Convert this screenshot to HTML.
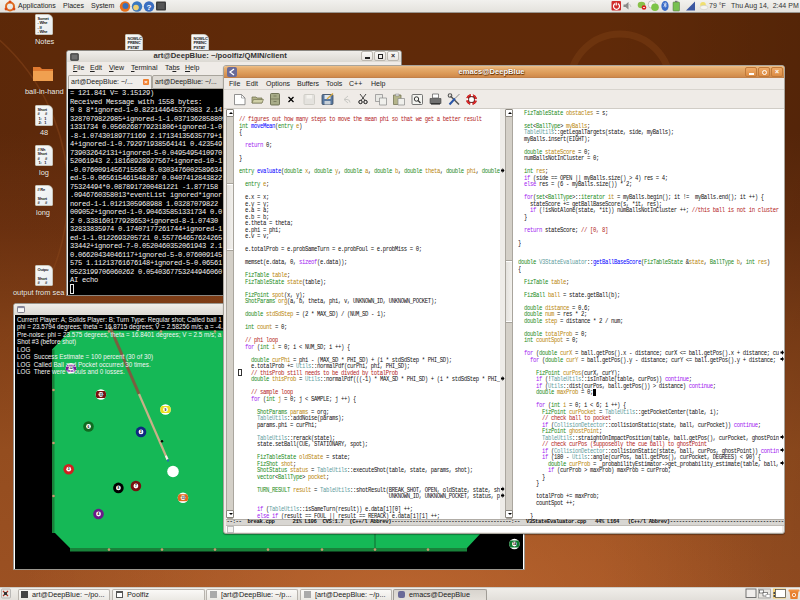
<!DOCTYPE html>
<html><head><meta charset="utf-8">
<style>
*{margin:0;padding:0;box-sizing:border-box}
html,body{width:800px;height:600px;overflow:hidden}
body{position:relative;font-family:"Liberation Sans",sans-serif;
background:radial-gradient(ellipse 380px 200px at 400px 610px,rgba(196,108,52,0.7),rgba(196,108,52,0) 100%),linear-gradient(90deg,rgba(0,0,0,0.04),rgba(0,0,0,0) 40%,rgba(0,0,0,0) 75%,rgba(0,0,0,0.12)),linear-gradient(180deg,#602a08 0%,#602a0a 22%,#6e3210 38%,#864218 55%,#9a5020 75%,#a25424 100%);}
.a{position:absolute}
/* top panel */
#top{left:0;top:0;width:800px;height:13px;background:linear-gradient(#f2f1ee,#e4e2dd);border-bottom:1px solid #9a9690}
.pt{position:absolute;top:0px;font-size:7px;color:#222;line-height:11px;white-space:nowrap}
/* desktop icons */
.di{position:absolute;width:18px;height:21px;background:linear-gradient(135deg,#fafaf8,#e8ecf0);border:1px solid #c8c4b8;border-radius:1px 5px 1px 1px}
.di i{display:block;font-style:normal;font:bold 4px "Liberation Sans",sans-serif;color:#222;line-height:4.5px;padding:1.5px 0 0 1.5px;white-space:pre;letter-spacing:-0.2px}
.dl{position:absolute;font-size:7.4px;color:#f4ece4;white-space:nowrap;text-shadow:0 0 1px #3a1a00}
/* windows */
.win{position:absolute;background:#efebe7;border:1px solid #8a8680;border-radius:3px 3px 0 0;overflow:hidden}
.tb{position:absolute;left:0;top:0;right:0;height:11px;background:linear-gradient(#f0eeea,#dcd9d3)}
.tt{position:absolute;top:0;font:bold 7.5px "Liberation Sans",sans-serif;color:#333;line-height:11px;white-space:nowrap}
.btn{position:absolute;top:0px;width:12px;height:10px;border:1px solid #bcb8b0;border-radius:2px;background:linear-gradient(#faf9f7,#e8e5e0);font:bold 7px/8px "Liberation Sans",sans-serif;color:#222;text-align:center}
.menu{position:absolute;font-size:7px;color:#222;line-height:10px;white-space:nowrap}
/* terminal */
.tl{position:absolute;left:2px;font:7.1px/8.5px "Liberation Mono",monospace;letter-spacing:-0.26px;color:#f2f2f2;white-space:pre}
/* emacs code */
.cl{position:absolute;left:0;font:5.6px/6.5px "Liberation Mono",monospace;letter-spacing:-0.36px;color:#111;white-space:pre}
.cs .cl{transform:scaleY(1.15);transform-origin:0 50%}
.cl i{font-style:normal}
i.r{color:#b22222}i.t{color:#228b22}i.f{color:#0000ff}i.k{color:#a020f0}i.v{color:#b8860b}i.c{color:#5f9ea0}
.pl{position:absolute;left:2px;font:6.3px/7.5px "Liberation Sans",sans-serif;color:#f4f4f4;white-space:pre}
.tbtn{position:absolute;top:589px;height:11px;border:1px solid #b8b4ae;border-bottom:none;border-radius:2px 2px 0 0;background:linear-gradient(#faf9f7,#ebe9e4)}
.tbi{position:absolute;top:591px;width:7px;height:7px}
.tbt{position:absolute;top:589px;font-size:7.3px;line-height:11px;color:#222;white-space:nowrap}
.sbb{position:absolute;width:8px;height:8px;background:#fff;border:1px solid #8a867e;border-radius:1px}
.sbb:after{content:"";position:absolute;left:1.5px;top:2px;border-left:2px solid transparent;border-right:2px solid transparent;border-bottom:2.5px solid #000}
.sbb.dn:after{border-bottom:none;border-top:2.5px solid #000}
.ball{position:absolute;width:11px;height:11px;border-radius:50%}
</style></head><body>

<!-- desktop swirls -->
<svg class="a" style="left:0;top:0" width="800" height="600">
  <circle cx="620" cy="84" r="50" fill="none" stroke="#7e4016" stroke-width="7" opacity="0.45"/>
  <circle cx="-137" cy="193" r="205" fill="none" stroke="#85441a" stroke-width="1.6" opacity="0.55"/>
</svg>

<!-- top panel -->
<div id="top" class="a">
  <svg class="a" style="left:4px;top:0" width="12" height="13"><circle cx="6" cy="6.5" r="4" fill="none" stroke="#dd6b20" stroke-width="2"/><circle cx="6" cy="1.8" r="1.4" fill="#dd4814"/><circle cx="2" cy="9" r="1.4" fill="#dd4814"/><circle cx="10" cy="9" r="1.4" fill="#dd4814"/></svg>
  <div class="pt" style="left:18px">Applications</div>
  <div class="pt" style="left:63px">Places</div>
  <div class="pt" style="left:91px">System</div>
  <svg class="a" style="left:119px;top:0" width="50" height="13">
    <circle cx="6" cy="6.5" r="5.2" fill="#e8701a"/><circle cx="6.5" cy="6" r="3" fill="#3a6fb8"/>
    <circle cx="18" cy="6.5" r="5.2" fill="#3a78c0"/><circle cx="17" cy="7.5" r="2.8" fill="#f0d070"/>
    <circle cx="30" cy="6.5" r="5.2" fill="#3a6ec0"/><text x="30" y="10" font-size="8" font-weight="bold" fill="#fff" text-anchor="middle" font-family="Liberation Sans">?</text>
    <rect x="37" y="1.5" width="10" height="9" rx="1" fill="#3c3c3c"/><rect x="38.5" y="3" width="7" height="6" fill="#555"/>
  </svg>
  <svg class="a" style="left:0;top:0" width="800" height="12">
    <rect x="611.5" y="1" width="9.5" height="9.5" rx="1" fill="#d02a2a"/><path d="M617.8 3.6a3 3 0 1 1 -2.6 0" fill="none" stroke="#fff" stroke-width="1.2"/><path d="M616.25 2.5v3" stroke="#fff" stroke-width="1.2"/>
    <path d="M623.5 4.5h2l3-2.5v7.5l-3-2.5h-2z" fill="#8a8a88"/><path d="M629.5 4l1.5 3" stroke="#aaa" stroke-width="0.6"/>
    <ellipse cx="641.5" cy="5" rx="3.8" ry="3.2" fill="#88c048"/><circle cx="644" cy="7.5" r="2.3" fill="#d82020"/><rect x="643" y="7.2" width="2" height="0.8" fill="#fff"/>
    <circle cx="652" cy="4.5" r="3.8" fill="#f4f4f2" stroke="#999" stroke-width="0.5"/><circle cx="655" cy="7.3" r="3.8" fill="#7cc448"/>
    <ellipse cx="665" cy="6" rx="3.6" ry="5" fill="#3a6cc8"/><path d="M663.5 3.5l3 2.5-1.5 1.2v-4.5l1.5 1.2-3 2.5" stroke="#fff" stroke-width="0.6" fill="none"/>
    <rect x="673" y="2" width="6.5" height="9" rx="0.8" fill="#78c050" stroke="#507040" stroke-width="0.5"/><rect x="675" y="0.8" width="2.5" height="1.4" fill="#777"/>
    <path d="M686 10.5h9v-9z" fill="#3a56a0"/>
    <circle cx="703" cy="4.8" r="2.8" fill="#f0e070"/><ellipse cx="704" cy="7.5" rx="3.8" ry="2.2" fill="#f4f4f0" stroke="#b8b8b0" stroke-width="0.4"/>
  </svg>
  <div class="pt" style="left:709px;white-space:pre;color:#333">79 °F</div>
  <div class="pt" style="left:731px;white-space:pre;color:#333">Thu Aug 14,  2:44 PM</div>
</div>

<!-- desktop icons -->
<div class="di" style="left:35px;top:14px"><i>Somet
- Whe
- If
- Whe</i></div>
<div class="dl" style="left:35px;top:37px">Notes</div>
<svg class="a" style="left:32px;top:64px" width="22" height="18"><path d="M1 3h7l2 2h11v12H1z" fill="#e07a30"/><path d="M1 7h20v10H1z" fill="#f0a050"/></svg>
<div class="dl" style="left:25px;top:87px">ball-in-hand</div>
<div class="di" style="left:35px;top:105px"><i>Short
#      #
 1:   1
 2:   1</i></div>
<div class="dl" style="left:40px;top:128px">48</div>
<div class="di" style="left:35px;top:145px"><i>// Nh
Short
#      #
 1:   1</i></div>
<div class="dl" style="left:39px;top:168px">log</div>
<div class="di" style="left:35px;top:185px"><i>// Re

Short
#      #</i></div>
<div class="dl" style="left:36px;top:208px">long</div>
<div class="di" style="left:35px;top:265px"><i>Outpu

Short
#      #</i></div>
<div class="dl" style="left:13px;top:288px">output from sea</div>
<div class="di" style="left:125px;top:34px"><i>NOWLC
PRENC
PSTAT</i></div>
<div class="di" style="left:191px;top:34px"><i>NOWLC
PRENC
PSTAT</i></div>

<!-- terminal window -->
<div class="win" style="left:66px;top:50px;width:336px;height:246px">
  <div class="tb"></div>
  <svg class="a" style="left:3px;top:2px" width="9" height="8"><rect x="0.5" y="0.5" width="8" height="7" rx="1" fill="#444" stroke="#333" stroke-width="0.6"/><rect x="1.5" y="1.5" width="6" height="5" fill="#707070"/></svg>
  <div class="tt" style="left:86.5px;top:-1.5px;font-size:7.7px">art@DeepBlue: ~/poolfiz/QMIN/client</div>
  <div class="btn" style="left:294px"><div class="a" style="left:3px;top:5px;width:5px;height:1.5px;background:#222"></div></div>
  <div class="btn" style="left:307px"><div class="a" style="left:3px;top:2px;width:5px;height:4.5px;border:1px solid #222;border-top-width:1.5px"></div></div>
  <div class="btn" style="left:320px">×</div>
  <div class="menu" style="left:6px;top:12px"><u>F</u>ile</div>
  <div class="menu" style="left:23px;top:12px"><u>E</u>dit</div>
  <div class="menu" style="left:42px;top:12px"><u>V</u>iew</div>
  <div class="menu" style="left:64px;top:12px"><u>T</u>erminal</div>
  <div class="menu" style="left:98px;top:12px">Ta<u>b</u>s</div>
  <div class="menu" style="left:118px;top:12px"><u>H</u>elp</div>
  <div class="a" style="left:1px;top:24px;width:84px;height:14px;background:#efedea;border:1px solid #a8a49c;border-bottom:none;border-radius:2px 2px 0 0"></div>
  <div class="menu" style="left:4px;top:26px">art@DeepBlue: ~/...</div>
  <div class="a" style="left:76px;top:28px;width:6px;height:6px;background:#f08030;border-radius:1px;font:bold 6px/6px 'Liberation Sans';color:#fff;text-align:center">×</div>
  <div class="a" style="left:85px;top:24px;width:200px;height:14px;background:#dedad4;border:1px solid #a8a49c;border-radius:2px 2px 0 0"></div>
  <div class="menu" style="left:88px;top:26px">art@DeepBlue: ~/...</div>
  <div class="a" style="left:1px;top:38px;width:334px;height:206px;background:#000">
    <div class="a" style="left:0;top:0;width:155px;height:206px">
<div class="tl" style="top:0.00px">= 121.841 V= 3.15129)</div>
<div class="tl" style="top:8.50px">Received Message with 1558 bytes:</div>
<div class="tl" style="top:17.00px">0 8 8*ignored-1-0.822144645372083 2.14</div>
<div class="tl" style="top:25.50px">3287079822985+ignored-1-1.0371362858809</div>
<div class="tl" style="top:34.00px">1331734 0.0560268779231806+ignored-1-0</div>
<div class="tl" style="top:42.50px">-8-1.07430189771169 2.17134135635779+i</div>
<div class="tl" style="top:51.00px">4+ignored-1-0.792971938564141 0.423549</div>
<div class="tl" style="top:59.50px">739032642131+ignored-5-0.0495495410970</div>
<div class="tl" style="top:68.00px">52061943 2.18168928927567+ignored-10-1</div>
<div class="tl" style="top:76.50px">-0.0760091456715568 0.0303476002589634</div>
<div class="tl" style="top:85.00px">ed-5-0.065615461548287 0.0407412843822</div>
<div class="tl" style="top:93.50px">75324494*0.0878917200481221 -1.877158</div>
<div class="tl" style="top:102.00px">.0946760358013*eventList ignored*ignor</div>
<div class="tl" style="top:110.50px">nored-1-1.0121305968988 1.03287079822</div>
<div class="tl" style="top:119.00px">009052+ignored-1-0.904635851331734 0.0</div>
<div class="tl" style="top:127.50px">2 0.338160177928653+ignored-8-1.07430</div>
<div class="tl" style="top:136.00px">32833835974 0.17407177261744+ignored-1</div>
<div class="tl" style="top:144.50px">ed-1-1.0122693205721 0.557764657624265</div>
<div class="tl" style="top:153.00px">33442+ignored-7-0.0520460352061943 2.1</div>
<div class="tl" style="top:161.50px">0.06620434046117+ignored-5-0.076009145</div>
<div class="tl" style="top:170.00px">575 1.11213761676148+ignored-5-0.06561</div>
<div class="tl" style="top:178.50px">0523199706060262 0.0540367753244946060</div>
<div class="tl" style="top:187.00px">AI echo</div>
      <div class="a" style="left:2px;top:195px;width:4px;height:10px;border:1px solid #e8e8e8"></div>
    </div>
  </div>
</div>

<!-- poolfiz window -->
<div class="win" style="left:13px;top:303px;width:512px;height:267px;background:#fff;border-color:#9a968e">
  <div class="tb" style="height:11px"></div>
  <svg class="a" style="left:3px;top:2px" width="8" height="7"><rect x="0.5" y="0.5" width="7" height="6" rx="0.8" fill="#f8f8f8" stroke="#667" stroke-width="0.8"/><rect x="0.5" y="0.5" width="7" height="1.6" fill="#8a8aa0"/></svg>
  <div class="a" style="left:1px;top:11px;width:508px;height:254px;background:#000;overflow:hidden">
    <svg class="a" style="left:0;top:1px" width="508" height="253"><polygon points="37.0,33.4 55.4,14.5 515.0,14.5 515.0,217.0 466.0,217.0 452.0,232.0 55.0,232.0 40.0,217.0 37.0,217.0" fill="#15b856"/><polygon points="37.0,33.4 39.5,33.4 39.5,217.0 37.0,217.0" fill="#18823a"/><polygon points="55.0,232.0 452.0,232.0 452.0,235.6 55.0,235.6" fill="#18823a"/><line x1="375.0" y1="533" x2="375.0" y2="548" stroke="#106a30" stroke-width="1" transform="translate(-15,-316)"/><circle cx="38.5" cy="74.0" r="1.3" fill="#c89870"/><circle cx="38.5" cy="127.0" r="1.3" fill="#c89870"/><circle cx="38.5" cy="180.0" r="1.3" fill="#c89870"/><circle cx="94.0" cy="233.6" r="1.3" fill="#c89870"/><circle cx="147.0" cy="233.6" r="1.3" fill="#c89870"/><circle cx="200.0" cy="233.6" r="1.3" fill="#c89870"/><circle cx="253.0" cy="233.6" r="1.3" fill="#c89870"/><circle cx="307.0" cy="233.6" r="1.3" fill="#c89870"/><circle cx="360.0" cy="233.6" r="1.3" fill="#c89870"/><circle cx="413.0" cy="233.6" r="1.3" fill="#c89870"/><circle cx="94.0" cy="15.5" r="1.3" fill="#c89870"/><circle cx="146.0" cy="15.5" r="1.3" fill="#c89870"/><circle cx="200.0" cy="15.5" r="1.3" fill="#c89870"/><circle cx="56.0" cy="52.2" r="5.3" fill="#fff"/><clipPath id="c12"><circle cx="56.0" cy="52.2" r="5.3"/></clipPath><rect x="50.5" y="48.7" width="11" height="7" fill="#7a1a9a" clip-path="url(#c12)"/><circle cx="56.0" cy="52.2" r="2.4" fill="#fff"/><text x="56.0" y="53.3" font-size="3.2" font-weight="bold" fill="#000" text-anchor="middle" font-family="Liberation Sans">12</text><circle cx="85.9" cy="78.5" r="5.3" fill="#fff"/><clipPath id="c15"><circle cx="85.9" cy="78.5" r="5.3"/></clipPath><rect x="80.4" y="75.0" width="11" height="7" fill="#7a1010" clip-path="url(#c15)"/><circle cx="85.9" cy="78.5" r="2.4" fill="#fff"/><text x="85.9" y="79.6" font-size="3.2" font-weight="bold" fill="#000" text-anchor="middle" font-family="Liberation Sans">15</text><circle cx="150.5" cy="93.5" r="5.3" fill="#fff"/><clipPath id="c9"><circle cx="150.5" cy="93.5" r="5.3"/></clipPath><rect x="145.0" y="90.0" width="11" height="7" fill="#e8e020" clip-path="url(#c9)"/><circle cx="150.5" cy="93.5" r="2.4" fill="#fff"/><text x="150.5" y="94.6" font-size="3.2" font-weight="bold" fill="#000" text-anchor="middle" font-family="Liberation Sans">9</text><circle cx="73.5" cy="110.5" r="5.3" fill="#106a20"/><circle cx="73.5" cy="110.5" r="2.4" fill="#fff"/><text x="73.5" y="111.6" font-size="3.2" font-weight="bold" fill="#000" text-anchor="middle" font-family="Liberation Sans">6</text><circle cx="126.0" cy="115.9" r="5.3" fill="#102880"/><circle cx="126.0" cy="115.9" r="2.4" fill="#fff"/><text x="126.0" y="117.0" font-size="3.2" font-weight="bold" fill="#000" text-anchor="middle" font-family="Liberation Sans">2</text><circle cx="53.7" cy="153.2" r="5.3" fill="#d02020"/><circle cx="53.7" cy="153.2" r="2.4" fill="#fff"/><text x="53.7" y="154.3" font-size="3.2" font-weight="bold" fill="#000" text-anchor="middle" font-family="Liberation Sans">3</text><circle cx="103.4" cy="171.9" r="5.3" fill="#000000"/><circle cx="103.4" cy="171.9" r="2.4" fill="#fff"/><text x="103.4" y="173.0" font-size="3.2" font-weight="bold" fill="#000" text-anchor="middle" font-family="Liberation Sans">8</text><circle cx="120.9" cy="170.0" r="5.3" fill="#7a1010"/><circle cx="120.9" cy="170.0" r="2.4" fill="#fff"/><text x="120.9" y="171.1" font-size="3.2" font-weight="bold" fill="#000" text-anchor="middle" font-family="Liberation Sans">7</text><circle cx="168.0" cy="181.7" r="5.3" fill="#fff"/><clipPath id="c13"><circle cx="168.0" cy="181.7" r="5.3"/></clipPath><rect x="162.5" y="178.2" width="11" height="7" fill="#e06a20" clip-path="url(#c13)"/><circle cx="168.0" cy="181.7" r="2.4" fill="#fff"/><text x="168.0" y="182.8" font-size="3.2" font-weight="bold" fill="#000" text-anchor="middle" font-family="Liberation Sans">13</text><circle cx="83.5" cy="198.0" r="5.3" fill="#6a1a8a"/><circle cx="83.5" cy="198.0" r="2.4" fill="#fff"/><text x="83.5" y="199.1" font-size="3.2" font-weight="bold" fill="#000" text-anchor="middle" font-family="Liberation Sans">4</text><circle cx="499.4" cy="228.0" r="5.3" fill="#fff"/><clipPath id="c14"><circle cx="499.4" cy="228.0" r="5.3"/></clipPath><rect x="493.9" y="224.5" width="11" height="7" fill="#107a30" clip-path="url(#c14)"/><circle cx="499.4" cy="228.0" r="2.4" fill="#fff"/><text x="499.4" y="229.1" font-size="3.2" font-weight="bold" fill="#000" text-anchor="middle" font-family="Liberation Sans">14</text><circle cx="158.0" cy="155.5" r="5.8" fill="#fff"/><line x1="95.0" y1="11.0" x2="124.0" y2="78.0" stroke="#7a5e40" stroke-width="3"/><line x1="124.0" y1="78.0" x2="152.5" y2="143.5" stroke="#c8b088" stroke-width="2.2"/><line x1="150.8" y1="139.6" x2="152.5" y2="143.5" stroke="#f4f4f0" stroke-width="2"/><line x1="152.5" y1="143.5" x2="153.5" y2="145.5" stroke="#2a70b0" stroke-width="2"/><circle cx="147.0" cy="125.2" r="1.2" fill="#000"/></svg>
<div class="pl" style="top:0.5px">Current Player: A; Solids Player: B; Turn Type: Regular shot; Called ball 1 in pocket 0</div><div class="pl" style="top:8.0px">phi = 23.5794 degrees; theta = 16.8715 degrees; V = 2.58256 m/s; a = -4.2</div><div class="pl" style="top:15.5px">Pre-noise: phi = 23.575 degrees; theta = 16.8401 degrees; V = 2.5 m/s; a = -4</div><div class="pl" style="top:23.0px">Shot #3 (before shot)</div><div class="pl" style="top:30.5px">LOG</div><div class="pl" style="top:38.0px">LOG  Success Estimate = 100 percent (30 of 30)</div><div class="pl" style="top:45.5px">LOG  Called Ball and Pocket occurred 30 times.</div><div class="pl" style="top:53.0px">LOG  There were 0 fouls and 0 losses.</div>
  </div>
</div>

<!-- emacs window -->
<div class="win" style="left:223px;top:65px;width:562px;height:469px;background:#efebe7;border-color:#a8a49c;border-radius:3px 3px 3px 3px;box-shadow:0 1px 1px rgba(0,0,0,0.35)">
  <div class="tb" style="height:12px;background:linear-gradient(#f0c088 0%,#e6ae70 18%,#dc9a58 60%,#d08a4c 90%,#b87a48 100%)"></div>
  <svg class="a" style="left:3px;top:1px" width="10" height="10"><rect x="0" y="0" width="10" height="10" rx="2" fill="#6a6a98"/><path d="M7 2L3 5l4 3" stroke="#fff" stroke-width="1.3" fill="none"/></svg>
  <div class="tt" style="left:234.5px;font-size:7.6px;color:#fff;text-shadow:0.5px 0.5px 0.8px #5a2a00,0 0 1px #7a4010">emacs@DeepBlue</div>
  <div class="btn" style="left:521px;top:1px;background:linear-gradient(#eeaa68,#dc8c44);border-color:#c07a3a"><div class="a" style="left:3px;top:5px;width:5px;height:1.5px;background:#fff"></div></div>
  <div class="btn" style="left:534px;top:1px;background:linear-gradient(#eeaa68,#dc8c44);border-color:#c07a3a"><div class="a" style="left:2.5px;top:1.5px;width:5px;height:5px;border:1px solid #fff;border-radius:50%"></div></div>
  <div class="btn" style="left:547px;top:1px;background:linear-gradient(#eeaa68,#dc8c44);border-color:#c07a3a;color:#fff">×</div>
  <div class="menu" style="left:5px;top:13px">File</div>
  <div class="menu" style="left:22px;top:13px">Edit</div>
  <div class="menu" style="left:42px;top:13px">Options</div>
  <div class="menu" style="left:73px;top:13px">Buffers</div>
  <div class="menu" style="left:102px;top:13px">Tools</div>
  <div class="menu" style="left:125px;top:13px">C++</div>
  <div class="menu" style="left:147px;top:13px">Help</div>
  <div class="a" style="left:0;top:23px;width:562px;height:1px;background:#d8d4ce"></div>
  <div class="a" style="left:0;top:42px;width:562px;height:1px;background:#d0ccc6"></div>
  <!-- code area -->
  <div class="a" style="left:2px;top:43px;width:556px;height:423px;background:#fff"></div>
  <!-- left scrollbar -->
  <div class="a" style="left:2px;top:43px;width:8px;height:410px;background:#d4d0c8;border:1px solid #aaa69e;border-radius:2px"></div>
  <div class="sbb" style="left:2px;top:43px"></div>
  <div class="a" style="left:2px;top:117px;width:8px;height:68px;background:linear-gradient(90deg,#e4e2de,#f2f0ec);border:1px solid #a8a49c;box-shadow:inset 0 1px 0 #fff,inset 0 -1px 0 #fff"></div>
  <div class="sbb dn" style="left:2px;top:444px"></div>
  <div class="a" style="left:276px;top:43px;width:5px;height:410px;background:#eeece8"></div>
  <!-- right scrollbar -->
  <div class="a" style="left:281px;top:43px;width:8px;height:410px;background:#d4d0c8;border:1px solid #aaa69e;border-radius:2px"></div>
  <div class="sbb" style="left:281px;top:43px"></div>
  <div class="a" style="left:281px;top:194px;width:8px;height:63px;background:linear-gradient(90deg,#e4e2de,#f2f0ec);border:1px solid #a8a49c;box-shadow:inset 0 1px 0 #fff,inset 0 -1px 0 #fff"></div>
  <div class="sbb dn" style="left:281px;top:444px"></div>
  <div class="a" style="left:556px;top:43px;width:4px;height:410px;background:#fff"></div>
  <div class="a" style="left:15px;top:43px;width:261px;height:410px;overflow:hidden">
    <div class="a cs" style="left:0;top:8px">
<div class="cl" style="top:0.00px"><i class=r>// figures out how many steps to move the mean phi so that we get a better result</i></div>
<div class="cl" style="top:6.50px"><i class=t>int</i> <i class=f>moveMean</i>(<i class=t>entry</i> <i class=v>e</i>)</div>
<div class="cl" style="top:13.00px">{</div>
<div class="cl" style="top:26.00px">  <i class=k>return</i> 0;</div>
<div class="cl" style="top:39.00px">}</div>
<div class="cl" style="top:52.00px"><i class=t>entry</i> <i class=f>evaluate</i>(<i class=t>double</i> <i class=v>x</i>, <i class=t>double</i> <i class=v>y</i>, <i class=t>double</i> <i class=v>a</i>, <i class=t>double</i> <i class=v>b</i>, <i class=t>double</i> <i class=v>theta</i>, <i class=t>double</i> <i class=v>phi</i>, <i class=t>double</i></div>
<div class="cl" style="top:65.00px">  <i class=t>entry</i> <i class=v>e</i>;</div>
<div class="cl" style="top:78.00px">  e.x = x;</div>
<div class="cl" style="top:84.50px">  e.y = y;</div>
<div class="cl" style="top:91.00px">  e.a = a;</div>
<div class="cl" style="top:97.50px">  e.b = b;</div>
<div class="cl" style="top:104.00px">  e.theta = theta;</div>
<div class="cl" style="top:110.50px">  e.phi = phi;</div>
<div class="cl" style="top:117.00px">  e.v = v;</div>
<div class="cl" style="top:130.00px">  e.totalProb = e.probSameTurn = e.probFoul = e.probMiss = 0;</div>
<div class="cl" style="top:143.00px">  memset(e.data, 0, <i class=k>sizeof</i>(e.data));</div>
<div class="cl" style="top:156.00px">  <i class=t>FizTable</i> <i class=v>table</i>;</div>
<div class="cl" style="top:162.50px">  <i class=t>FizTableState</i> <i class=v>state</i>(table);</div>
<div class="cl" style="top:175.50px">  <i class=t>FizPoint</i> <i class=v>spot</i>(x, y);</div>
<div class="cl" style="top:182.00px">  <i class=t>ShotParams</i> <i class=v>org</i>(a, b, theta, phi, v, UNKNOWN_ID, UNKNOWN_POCKET);</div>
<div class="cl" style="top:195.00px">  <i class=t>double</i> <i class=v>stdSdStep</i> = (2 * MAX_SD) / (NUM_SD - 1);</div>
<div class="cl" style="top:208.00px">  <i class=t>int</i> <i class=v>count</i> = 0;</div>
<div class="cl" style="top:221.00px">  <i class=r>// phi loop</i></div>
<div class="cl" style="top:227.50px">  <i class=k>for</i> (<i class=t>int</i> <i class=v>i</i> = 0; i &lt; NUM_SD; i ++) {</div>
<div class="cl" style="top:240.50px">    <i class=t>double</i> <i class=v>curPhi</i> = phi - (MAX_SD * PHI_SD) + (i * stdSdStep * PHI_SD);</div>
<div class="cl" style="top:247.00px">    e.totalProb += <i class=c>Utils</i>::normalPdf(curPhi, phi, PHI_SD);</div>
<div class="cl" style="top:253.50px">    <i class=r>// thisProb still needs to be divded by totalProb</i></div>
<div class="cl" style="top:260.00px">    <i class=t>double</i> <i class=v>thisProb</i> = <i class=c>Utils</i>::normalPdf(((-1) * MAX_SD * PHI_SD) + (i * stdSdStep * PHI_</div>
<div class="cl" style="top:273.00px">    <i class=r>// sample loop</i></div>
<div class="cl" style="top:279.50px">    <i class=k>for</i> (<i class=t>int</i> <i class=v>j</i> = 0; j &lt; SAMPLE; j ++) {</div>
<div class="cl" style="top:292.50px">      <i class=t>ShotParams</i> <i class=v>params</i> = org;</div>
<div class="cl" style="top:299.00px">      <i class=c>TableUtils</i>::addNoise(params);</div>
<div class="cl" style="top:305.50px">      params.phi = curPhi;</div>
<div class="cl" style="top:318.50px">      <i class=c>TableUtils</i>::rerack(state);</div>
<div class="cl" style="top:325.00px">      state.setBall(CUE, STATIONARY, spot);</div>
<div class="cl" style="top:338.00px">      <i class=t>FizTableState</i> <i class=v>oldState</i> = state;</div>
<div class="cl" style="top:344.50px">      <i class=t>FizShot</i> <i class=v>shot</i>;</div>
<div class="cl" style="top:351.00px">      <i class=t>ShotStatus</i> <i class=v>status</i> = <i class=c>TableUtils</i>::executeShot(table, state, params, shot);</div>
<div class="cl" style="top:357.50px">      <i class=t>vector</i>&lt;<i class=t>BallType</i>&gt; <i class=v>pocket</i>;</div>
<div class="cl" style="top:370.50px">      <i class=t>TURN_RESULT</i> <i class=v>result</i> = <i class=c>TableUtils</i>::shotResult(BREAK_SHOT, OPEN, oldState, state, sh</div>
<div class="cl" style="top:377.00px">                                                  UNKNOWN_ID, UNKNOWN_POCKET, status, p</div>
<div class="cl" style="top:390.00px">      <i class=k>if</i> (<i class=c>TableUtils</i>::isSameTurn(result)) e.data[i][0] ++;</div>
<div class="cl" style="top:396.50px">      <i class=k>else</i> <i class=k>if</i> (result == FOUL || result == RERACK) e.data[i][1] ++;</div>
    </div>
  </div>
  <div class="a" style="left:294px;top:43px;width:262px;height:410px;overflow:hidden">
    <div class="a cs" style="left:0;top:1.5px">
<div class="cl" style="top:0.00px">  <i class=t>FizTableState</i> <i class=v>obstacles</i> = s;</div>
<div class="cl" style="top:13.00px">  <i class=t>set</i>&lt;<i class=t>BallType</i>&gt; <i class=v>myBalls</i>;</div>
<div class="cl" style="top:19.50px">  <i class=c>TableUtils</i>::getLegalTargets(state, side, myBalls);</div>
<div class="cl" style="top:26.00px">  myBalls.insert(EIGHT);</div>
<div class="cl" style="top:39.00px">  <i class=t>double</i> <i class=v>stateScore</i> = 0;</div>
<div class="cl" style="top:45.50px">  numBallsNotInCluster = 0;</div>
<div class="cl" style="top:58.50px">  <i class=t>int</i> <i class=v>res</i>;</div>
<div class="cl" style="top:65.00px">  <i class=k>if</i> (side == OPEN || myBalls.size() &gt; 4) res = 4;</div>
<div class="cl" style="top:71.50px">  <i class=k>else</i> res = (6 - myBalls.size()) * 2;</div>
<div class="cl" style="top:84.50px">  <i class=k>for</i>(<i class=t>set</i>&lt;<i class=t>BallType</i>&gt;::<i class=t>iterator</i> <i class=v>it</i> = myBalls.begin(); it !=  myBalls.end(); it ++) {</div>
<div class="cl" style="top:91.00px">    stateScore += getBallBaseScore(s, *it, res);</div>
<div class="cl" style="top:97.50px">    <i class=k>if</i> (!isNotAlone(state, *it)) numBallsNotInCluster ++; <i class=r>//this ball is not in cluster</i></div>
<div class="cl" style="top:104.00px">  }</div>
<div class="cl" style="top:117.00px">  <i class=k>return</i> stateScore; <i class=r>// [0, 8]</i></div>
<div class="cl" style="top:130.00px">}</div>
<div class="cl" style="top:149.50px"><i class=t>double</i> <i class=c>V3StateEvaluator</i>::<i class=f>getBallBaseScore</i>(<i class=t>FizTableState</i> &amp;<i class=v>state</i>, <i class=t>BallType</i> <i class=v>b</i>, <i class=t>int</i> <i class=v>res</i>)</div>
<div class="cl" style="top:156.00px">{</div>
<div class="cl" style="top:169.00px">  <i class=t>FizTable</i> <i class=v>table</i>;</div>
<div class="cl" style="top:182.00px">  <i class=t>FizBall</i> <i class=v>ball</i> = state.getBall(b);</div>
<div class="cl" style="top:195.00px">  <i class=t>double</i> <i class=v>distance</i> = 0.6;</div>
<div class="cl" style="top:201.50px">  <i class=t>double</i> <i class=v>num</i> = res * 2;</div>
<div class="cl" style="top:208.00px">  <i class=t>double</i> <i class=v>step</i> = distance * 2 / num;</div>
<div class="cl" style="top:221.00px">  <i class=t>double</i> <i class=v>totalProb</i> = 0;</div>
<div class="cl" style="top:227.50px">  <i class=t>int</i> <i class=v>countSpot</i> = 0;</div>
<div class="cl" style="top:240.50px">  <i class=k>for</i> (<i class=t>double</i> <i class=v>curX</i> = ball.getPos().x - distance; curX &lt;= ball.getPos().x + distance; cu</div>
<div class="cl" style="top:247.00px">    <i class=k>for</i> (<i class=t>double</i> <i class=v>curY</i> = ball.getPos().y - distance; curY &lt;= ball.getPos().y + distance; </div>
<div class="cl" style="top:260.00px">      <i class=t>FizPoint</i> <i class=v>curPos</i>(curX, curY);</div>
<div class="cl" style="top:266.50px">      <i class=k>if</i> (!<i class=c>TableUtils</i>::isInTable(table, curPos)) <i class=k>continue</i>;</div>
<div class="cl" style="top:273.00px">      <i class=k>if</i> (<i class=c>Utils</i>::dist(curPos, ball.getPos()) &gt; distance) <i class=k>continue</i>;</div>
<div class="cl" style="top:279.50px">      <i class=t>double</i> <i class=v>maxProb</i> = 0;</div>
<div class="cl" style="top:292.50px">      <i class=k>for</i> (<i class=t>int</i> <i class=v>i</i> = 0; i &lt; 6; i ++) {</div>
<div class="cl" style="top:299.00px">        <i class=t>FizPoint</i> <i class=v>curPocket</i> = <i class=c>TableUtils</i>::getPocketCenter(table, i);</div>
<div class="cl" style="top:305.50px">        <i class=r>// check ball to pocket</i></div>
<div class="cl" style="top:312.00px">        <i class=k>if</i> (<i class=c>CollisionDetector</i>::collisionStatic(state, ball, curPocket)) <i class=k>continue</i>;</div>
<div class="cl" style="top:318.50px">        <i class=t>FizPoint</i> <i class=v>ghostPoint</i>;</div>
<div class="cl" style="top:325.00px">        <i class=c>TableUtils</i>::straightOnImpactPosition(table, ball.getPos(), curPocket, ghostPoin</div>
<div class="cl" style="top:331.50px">        <i class=r>// check curPos (supposedly the cue ball) to ghostPoint</i></div>
<div class="cl" style="top:338.00px">        <i class=k>if</i> (<i class=c>CollisionDetector</i>::collisionStatic(state, ball, curPos, ghostPoint)) <i class=k>contin</i></div>
<div class="cl" style="top:344.50px">        <i class=k>if</i> (180 - <i class=c>Utils</i>::angle(curPos, ball.getPos(), curPocket, DEGREES) &lt; 90) {</div>
<div class="cl" style="top:351.00px">          <i class=t>double</i> <i class=v>curProb</i> = _probabilityEstimator-&gt;get_probability_estimate(table, ball,</div>
<div class="cl" style="top:357.50px">          <i class=k>if</i> (curProb &gt; maxProb) maxProb = curProb;</div>
<div class="cl" style="top:364.00px">        }</div>
<div class="cl" style="top:370.50px">      }</div>
<div class="cl" style="top:383.50px">      totalProb += maxProb;</div>
<div class="cl" style="top:390.00px">      countSpot ++;</div>
<div class="cl" style="top:403.00px">    }</div>
    </div>
  </div>
  <!-- mode lines -->
  <div class="a" style="left:3px;top:460px;width:7px;height:7px;border:1px solid #bbb;background:#f4f4f2"></div>
  <div class="a" style="left:2px;top:452.5px;width:558px;height:7px;background:#d8d6d2;border-top:1px solid #b0aca6;border-bottom:1px solid #c0bcb6"></div>
  <div class="cl" style="left:2.5px;top:452.5px;font-weight:bold">--:--  break.cpp      21% L106  CVS:1.7  (C++/l Abbrev)---------------------------------------</div>
  <div class="cl" style="left:284px;top:452.5px;font-weight:bold">-:--  V3StateEvaluator.cpp   44% L164   (C++/l Abbrev)------------------------------------------------------</div>
</div>


<!-- emacs toolbar -->
<svg class="a" style="left:0;top:0" width="800" height="600" style="pointer-events:none">
 <g stroke-linejoin="round">
  <path d="M234.5 94.5h7l3.5 3.5v6.7h-10.5z" fill="#fff" stroke="#777" stroke-width="0.8"/><path d="M241.5 94.5v3.5h3.5" fill="none" stroke="#777" stroke-width="0.6"/>
  <path d="M252 97h4l1 1h5v5h-10z" fill="#b4b48a" stroke="#6a6a48" stroke-width="0.7"/><path d="M253.5 99.5h10l-1.5 3.5h-10z" fill="#d0d0a8" stroke="#6a6a48" stroke-width="0.6"/>
  <rect x="270.5" y="93.5" width="9" height="11.5" rx="1" fill="#a8ac88" stroke="#5a5e40" stroke-width="0.8"/><path d="M271 99h8M273.5 96h3M273.5 101.5h3" stroke="#5a5e40" stroke-width="0.6"/>
  <path d="M288.5 97l5 5M293.5 97l-5 5" stroke="#000" stroke-width="1.3"/>
  <rect x="304" y="94.5" width="10.5" height="10" rx="1" fill="#e4e2de" stroke="#c8c6c0" stroke-width="0.8"/><rect x="306.5" y="95" width="5.5" height="3.5" fill="#f4f2ee"/>
  <rect x="322" y="94.5" width="11" height="10" rx="1" fill="#5878a0" stroke="#3a4a60" stroke-width="0.8"/><rect x="324.5" y="95" width="6" height="4" fill="#e0e8f0"/><rect x="324.5" y="101" width="6" height="3.5" fill="#c8d0d8"/><path d="M327 99l6-5.5" stroke="#d8a840" stroke-width="1.3"/>
  <path d="M348 96l-4 3.5 4 3.5M344 99.5h3a3 3 0 0 1 3 3" fill="none" stroke="#c8c8c4" stroke-width="1"/>
  <path d="M360 94l5 6.5M366 94l-5 6.5" stroke="#333" stroke-width="0.9"/><circle cx="360.5" cy="102" r="1.7" fill="none" stroke="#111" stroke-width="1"/><circle cx="365.5" cy="102" r="1.7" fill="none" stroke="#111" stroke-width="1"/>
  <rect x="375.5" y="94.5" width="7" height="7" fill="#e8e8e4" stroke="#888" stroke-width="0.7"/><rect x="379.5" y="98" width="7" height="7" fill="#f0f0ec" stroke="#888" stroke-width="0.7"/>
  <rect x="393.5" y="95" width="7.5" height="9.5" fill="#b4b48a" stroke="#6a6a48" stroke-width="0.7"/><rect x="395.5" y="94" width="3.5" height="2" fill="#ddd" stroke="#777" stroke-width="0.4"/><rect x="398" y="98.5" width="6.5" height="6.5" fill="#f0f0ec" stroke="#888" stroke-width="0.7"/>
  <rect x="412" y="94.5" width="10.5" height="10" rx="1" fill="#f4f4f0" stroke="#555" stroke-width="0.8"/><circle cx="416.5" cy="99" r="2.2" fill="none" stroke="#333" stroke-width="1"/><path d="M418 100.5l2.5 2.5" stroke="#333" stroke-width="1.2"/>
  <rect x="432.5" y="94" width="6" height="4" fill="#fff" stroke="#555" stroke-width="0.7"/><path d="M430 98.5h11v5h-11z" fill="#707070" stroke="#444" stroke-width="0.6"/><rect x="431" y="103" width="9" height="1.6" fill="#333"/>
  <path d="M450.5 96l8.5 8.5" stroke="#555" stroke-width="1.5"/><circle cx="450" cy="95.5" r="1.8" fill="none" stroke="#555" stroke-width="1.1"/><path d="M459.5 94l-4.5 4.5" stroke="#888" stroke-width="1"/><path d="M455 98.5l-5.5 6" stroke="#2a56a8" stroke-width="2"/>
  <circle cx="471.5" cy="99.5" r="5.3" fill="#5a1010"/><circle cx="471.5" cy="99.5" r="4.4" fill="none" stroke="#e02a2a" stroke-width="2"/><circle cx="471.5" cy="99.5" r="4.4" fill="none" stroke="#fff" stroke-width="2" stroke-dasharray="2.2 4.7" stroke-dashoffset="1.1"/><circle cx="471.5" cy="99.5" r="2.6" fill="#fff"/><circle cx="471.5" cy="99.5" r="2.6" fill="none" stroke="#999" stroke-width="0.4"/>
 </g>
</svg>
<!-- cursor & fringe marks -->
<svg class="a" style="left:0;top:0" width="800" height="600"><path d="M501 169.6h1.5v-1.5l2 2.5-2 2.5v-1.5h-1.5z" fill="#000"/><path d="M501 377.6h1.5v-1.5l2 2.5-2 2.5v-1.5h-1.5z" fill="#000"/><path d="M501 488.1h1.5v-1.5l2 2.5-2 2.5v-1.5h-1.5z" fill="#000"/><path d="M501 494.6h1.5v-1.5l2 2.5-2 2.5v-1.5h-1.5z" fill="#000"/><path d="M780.5 351.5h1.5v-1.5l2 2.5-2 2.5v-1.5h-1.5z" fill="#000"/><path d="M780.5 358.0h1.5v-1.5l2 2.5-2 2.5v-1.5h-1.5z" fill="#000"/><path d="M780.5 436.0h1.5v-1.5l2 2.5-2 2.5v-1.5h-1.5z" fill="#000"/><path d="M780.5 449.0h1.5v-1.5l2 2.5-2 2.5v-1.5h-1.5z" fill="#000"/><path d="M780.5 462.0h1.5v-1.5l2 2.5-2 2.5v-1.5h-1.5z" fill="#000"/></svg>
<div class="a" style="left:593px;top:389px;width:3px;height:6.5px;background:#000"></div>
<div class="a" style="left:238px;top:369px;width:4px;height:6.5px;border:1px solid #333"></div>

<!-- bottom panel -->
<div class="a" style="left:0;top:587px;width:800px;height:13px;background:linear-gradient(#f0eeea,#e2dfda);border-top:1px solid #cfccc6"></div>
<svg class="a" style="left:0;top:587px" width="800" height="13">
  <rect x="1.5" y="2" width="9" height="9" rx="1" fill="#e8e6e2" stroke="#999" stroke-width="0.6"/><path d="M3 4l5 5M8 4l-5 5" stroke="#b03020" stroke-width="1.2"/><rect x="4" y="5" width="3" height="3" fill="#333"/>
</svg>
<div class="tbtn" style="left:18px;width:92px"></div><div class="tbi" style="left:21px;background:#444"></div><div class="tbt" style="left:32px">art@DeepBlue: ~/po...</div>
<div class="tbtn" style="left:112px;width:93px"></div><div class="tbi" style="left:116px;background:#fff;border:1px solid #555;border-top-width:2px"></div><div class="tbt" style="left:127px">Poolfiz</div>
<div class="tbtn" style="left:206px;width:92px"></div><div class="tbi" style="left:210px;background:#aaa"></div><div class="tbt" style="left:221px">[art@DeepBlue: ~/p...</div>
<div class="tbtn" style="left:300px;width:92px"></div><div class="tbi" style="left:304px;background:#aaa"></div><div class="tbt" style="left:315px">[art@DeepBlue: ~/p...</div>
<div class="tbtn" style="left:393px;width:94px;background:linear-gradient(#d8d4ce,#e4e0da);border-color:#a09c96"></div><div class="tbi" style="left:398px;background:#6a6a98;border-radius:2px"></div><div class="tbt" style="left:409px">emacs@DeepBlue</div>
<svg class="a" style="left:740px;top:587px" width="60" height="13">
  <rect x="6" y="2" width="10" height="8.5" fill="#f0eeec" stroke="#666" stroke-width="0.9"/>
  <rect x="18.5" y="2" width="12" height="9" fill="#e8e6e2" stroke="#888" stroke-width="0.6"/><rect x="19.5" y="3" width="4" height="3" fill="#fff" stroke="#444" stroke-width="0.6"/><rect x="23" y="5.5" width="4.5" height="3.5" fill="#fff" stroke="#444" stroke-width="0.6"/><rect x="26" y="7.5" width="4" height="3" fill="#fff" stroke="#888" stroke-width="0.5"/>
  <rect x="33" y="1.5" width="13" height="10" fill="#f6d070"/><rect x="35.5" y="2.5" width="10" height="8" fill="#fff" stroke="#444" stroke-width="0.7"/><rect x="33.5" y="5" width="1.5" height="2" fill="#444"/><rect x="33.5" y="8" width="1.5" height="2" fill="#444"/>
  <path d="M49.5 4h9l-1 8h-7z" fill="#e8802e"/><rect x="48.5" y="2.5" width="11" height="2" rx="0.5" fill="#f09040"/><circle cx="54" cy="8" r="1.7" fill="none" stroke="#fff" stroke-width="0.8"/>
</svg>
</body></html>
